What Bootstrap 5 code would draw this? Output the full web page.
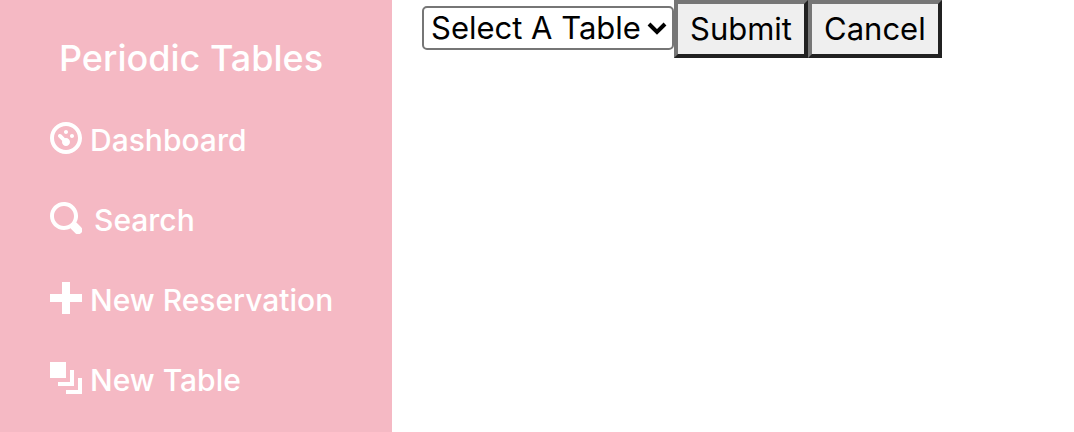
<!DOCTYPE html>
<html lang="en">
<head>
<meta charset="utf-8">
<meta name="viewport" content="width=device-width, initial-scale=1">
<title>Periodic Tables</title>
<link href="https://cdn.jsdelivr.net/npm/bootstrap@5.3.0/dist/css/bootstrap.min.css" rel="stylesheet">
<style>
  body { font-family: Inter, "Liberation Sans", sans-serif; font-size: 30px; line-height: 40px; color: #000; }
  .side-bar { flex: 0 0 392px; background: #f5b9c4; padding: 32px 0 0 50px; font-weight: 500; }
  .side-brand { font-size: 36px; line-height: 52px; padding-left: 9px; margin-bottom: 16px; }
  .side-bar .nav-link { color: #fff; padding: 20px 0; gap: 8px; }
  .side-bar .nav-link.wide-gap { gap: 12px; }
  .side-icon { width: 32px; height: 32px; fill: currentColor; margin-bottom: 4px; flex: none; }
  .seat-form { padding-left: 30px; }
  .table-picker { position: relative; width: 252px; margin-top: 6px; }
  .table-picker select { appearance: none; display: block; width: 100%; height: 44px; line-height: 40px; padding: 0 7px; border: 2px solid #767676; border-radius: 5px; background: #fff; color: #000; font-size: 31px; }
  .table-picker svg { position: absolute; right: 7px; top: 14px; width: 20px; height: 16px; pointer-events: none; }
  .plain-btn { height: 58px; padding: 0 12px; border: 4px solid; border-color: #767676 #212121 #212121 #767676; background: #efefef; color: #000; font-size: 31px; line-height: 48px; }
</style>
<script src="https://cdn.jsdelivr.net/npm/bootstrap@5.3.0/dist/js/bootstrap.bundle.min.js" defer></script>
</head>
<body>
<div class="d-flex min-vh-100">
  <nav class="side-bar" aria-label="Main">
    <a class="side-brand d-block text-white text-decoration-none" href="#">Periodic Tables</a>
    <ul class="nav flex-column flex-nowrap">
      <li class="nav-item"><a class="nav-link d-flex align-items-center" href="#">
        <svg class="side-icon" viewBox="0 0 8 8" aria-hidden="true"><path d="M4 0c-2.2 0-4 1.8-4 4s1.8 4 4 4 4-1.8 4-4-1.8-4-4-4zm0 1c1.66 0 3 1.34 3 3s-1.34 3-3 3-3-1.34-3-3 1.34-3 3-3zm0 1c-.28 0-.5.22-.5.5s.22.5.5.5.5-.22.5-.5-.22-.5-.5-.5zm-1.66 1a.5.5 0 0 0-.19.84l.91.91c-.02.08-.06.16-.06.25 0 .55.45 1 1 1s1-.45 1-1-.45-1-1-1c-.09 0-.17.04-.25.06l-.91-.91a.5.5 0 0 0-.44-.16.5.5 0 0 0-.06 0zm3.16 0c-.28 0-.5.22-.5.5s.22.5.5.5.5-.22.5-.5-.22-.5-.5-.5z"/></svg>
        <span>Dashboard</span></a></li>
      <li class="nav-item"><a class="nav-link wide-gap d-flex align-items-center" href="#">
        <svg class="side-icon" viewBox="0 0 8 8" aria-hidden="true"><path d="M3.5 0c-1.93 0-3.5 1.57-3.5 3.5s1.57 3.5 3.5 3.5c.59 0 1.17-.14 1.66-.41a1 1 0 0 0 .13.13l1 1a1.02 1.02 0 1 0 1.44-1.44l-1-1a1 1 0 0 0-.16-.13c.27-.49.44-1.06.44-1.66 0-1.93-1.55-3.5-3.5-3.5zm0 1c1.39 0 2.5 1.11 2.5 2.5 0 .66-.24 1.27-.66 1.72-.01.01-.02.02-.03.03a1 1 0 0 0-.13.13c-.44.4-1.04.63-1.69.63-1.39 0-2.5-1.11-2.5-2.5s1.11-2.5 2.5-2.5z"/></svg>
        <span>Search</span></a></li>
      <li class="nav-item"><a class="nav-link d-flex align-items-center" href="#">
        <svg class="side-icon" viewBox="0 0 8 8" aria-hidden="true"><path d="M3 0v3h-3v2h3v3h2v-3h3v-2h-3v-3h-2z"/></svg>
        <span>New Reservation</span></a></li>
      <li class="nav-item"><a class="nav-link d-flex align-items-center" href="#">
        <svg class="side-icon" viewBox="0 0 8 8" aria-hidden="true"><path d="M0 0v4h4v-4h-4zm5 2v3h-3v1h4v-4h-1zm2 2v3h-3v1h4v-4h-1z"/></svg>
        <span>New Table</span></a></li>
    </ul>
  </nav>
  <main class="flex-grow-1">
    <form class="seat-form d-flex align-items-start">
      <div class="table-picker flex-shrink-0">
        <select aria-label="Select A Table" name="table_id"><option>Select A Table</option></select>
        <svg viewBox="0 0 20 16" aria-hidden="true"><path d="M2 4l8 8 8-8" fill="none" stroke="#000" stroke-width="4"/></svg>
      </div>
      <button class="plain-btn" type="submit">Submit</button>
      <button class="plain-btn" type="button">Cancel</button>
    </form>
  </main>
</div>
</body>
</html>
